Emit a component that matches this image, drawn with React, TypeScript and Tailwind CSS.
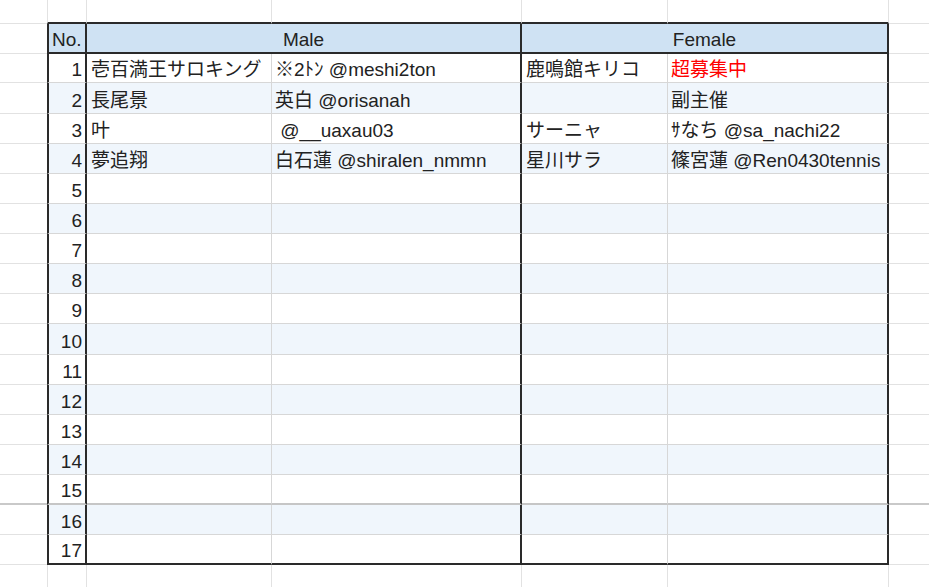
type Bottom = 'light' | 'mid' | 'dark';

interface RowData {
  n: number;
  a?: string;
  b?: string;
  c?: string;
  d?: string;
  red?: boolean;
  h: string;
  bottom: Bottom;
}

const FONT = "font-['Liberation_Sans','Noto_Sans_CJK_JP',sans-serif]";

const tableBottom: Record<Bottom, string> = {
  light: 'border-b border-b-[#d7d7d7]',
  mid: 'border-b-2 border-b-[#c6c6c6]',
  dark: 'border-b-2 border-b-[#2a2a2a]',
};

const marginBottom: Record<Bottom, string> = {
  light: 'border-b border-b-[#e2e2e2]',
  mid: 'border-b-2 border-b-[#c9c9c9]',
  dark: 'border-b border-b-[#e2e2e2]',
};

const rows: RowData[] = [
  { n: 1, a: '壱百満王サロキング', b: '※2ﾄﾝ @meshi2ton', c: '鹿鳴館キリコ', d: '超募集中', red: true, h: 'h-[29px]', bottom: 'light' },
  { n: 2, a: '長尾景', b: '英白 @orisanah', d: '副主催', h: 'h-[31px]', bottom: 'light' },
  { n: 3, a: '叶', b: ' @__uaxau03', c: 'サーニャ', d: 'ｻなち @sa_nachi22', h: 'h-[30px]', bottom: 'light' },
  { n: 4, a: '夢追翔', b: '白石蓮 @shiralen_nmmn', c: '星川サラ', d: '篠宮蓮 @Ren0430tennis', h: 'h-[30px]', bottom: 'light' },
  { n: 5, h: 'h-[30px]', bottom: 'light' },
  { n: 6, h: 'h-[30px]', bottom: 'light' },
  { n: 7, h: 'h-[30px]', bottom: 'light' },
  { n: 8, h: 'h-[30px]', bottom: 'light' },
  { n: 9, h: 'h-[30px]', bottom: 'light' },
  { n: 10, h: 'h-[31px]', bottom: 'light' },
  { n: 11, h: 'h-[30px]', bottom: 'light' },
  { n: 12, h: 'h-[30px]', bottom: 'light' },
  { n: 13, h: 'h-[30px]', bottom: 'light' },
  { n: 14, h: 'h-[30px]', bottom: 'light' },
  { n: 15, h: 'h-[30px]', bottom: 'mid' },
  { n: 16, h: 'h-[30px]', bottom: 'light' },
  { n: 17, h: 'h-[30px]', bottom: 'dark' },
];

const cell = 'flex shrink-0 items-end overflow-hidden whitespace-pre pb-[3px] leading-[19px]';

// strips above and below the table: empty sheet cells
function Strip({ grow }: { grow?: boolean }) {
  return (
    <div className={grow ? 'flex flex-1' : 'flex h-[24px]'}>
      <div className={`w-[47px] shrink-0 ${grow ? '' : 'border-b border-b-[#e2e2e2]'}`} />
      <div className={`w-[40px] shrink-0 border-x border-x-[#e2e2e2] ${grow ? '' : 'border-b-2 border-b-[#2a2a2a]'}`} />
      <div className={`w-[185px] shrink-0 border-r border-r-[#e2e2e2] ${grow ? '' : 'border-b-2 border-b-[#2a2a2a]'}`} />
      <div className={`w-[250px] shrink-0 border-r border-r-[#e2e2e2] ${grow ? '' : 'border-b-2 border-b-[#2a2a2a]'}`} />
      <div className={`w-[146px] shrink-0 border-r border-r-[#e2e2e2] ${grow ? '' : 'border-b-2 border-b-[#2a2a2a]'}`} />
      <div className={`w-[221px] shrink-0 border-r border-r-[#e2e2e2] ${grow ? '' : 'border-b-2 border-b-[#2a2a2a]'}`} />
      <div className={`flex-1 ${grow ? '' : 'border-b border-b-[#e2e2e2]'}`} />
    </div>
  );
}

function BodyRow({ row }: { row: RowData }) {
  const bg = row.n % 2 === 0 ? 'bg-[#f0f6fc]' : 'bg-white';
  const tb = tableBottom[row.bottom];
  return (
    <div className={`flex ${row.h}`}>
      <div className={`w-[47px] shrink-0 ${marginBottom[row.bottom]}`} />
      <div className={`${cell} w-[40px] justify-end border-x-2 border-x-[#2a2a2a] pr-[3px] ${tb} ${bg}`}>{row.n}</div>
      <div className={`${cell} w-[185px] border-r border-r-[#d7d7d7] pl-[4px] ${tb} ${bg}`}>{row.a}</div>
      <div className={`${cell} w-[250px] border-r-2 border-r-[#2a2a2a] pl-[3px] ${tb} ${bg}`}>{row.b}</div>
      <div className={`${cell} w-[146px] border-r border-r-[#d7d7d7] pl-[4px] ${tb} ${bg}`}>{row.c}</div>
      <div
        className={`${cell} w-[221px] border-r-2 border-r-[#2a2a2a] pl-[3px] ${tb} ${bg} ${row.red ? 'text-[#ff0000]' : ''}`}
      >
        {row.d}
      </div>
      <div className={`flex-1 ${marginBottom[row.bottom]}`} />
    </div>
  );
}

export default function App() {
  return (
    <div className={`flex h-[587px] w-[929px] flex-col overflow-hidden bg-white text-[19px] text-[#222222] ${FONT}`}>
      <Strip />

      {/* header */}
      <div className="flex h-[30px]">
        <div className="w-[47px] shrink-0 border-b border-b-[#e2e2e2]" />
        <div className={`${cell} w-[40px] border-x-2 border-x-[#2a2a2a] border-b-2 border-b-[#2a2a2a] bg-[#cfe2f3] pl-[3px]`}>
          No.
        </div>
        <div className={`${cell} w-[435px] justify-center border-r-2 border-r-[#2a2a2a] border-b-2 border-b-[#2a2a2a] bg-[#cfe2f3]`}>
          Male
        </div>
        <div className={`${cell} w-[367px] justify-center border-r-2 border-r-[#2a2a2a] border-b-2 border-b-[#2a2a2a] bg-[#cfe2f3]`}>
          Female
        </div>
        <div className="flex-1 border-b border-b-[#e2e2e2]" />
      </div>

      {rows.map((r) => (
        <BodyRow key={r.n} row={r} />
      ))}

      <Strip grow />
    </div>
  );
}
